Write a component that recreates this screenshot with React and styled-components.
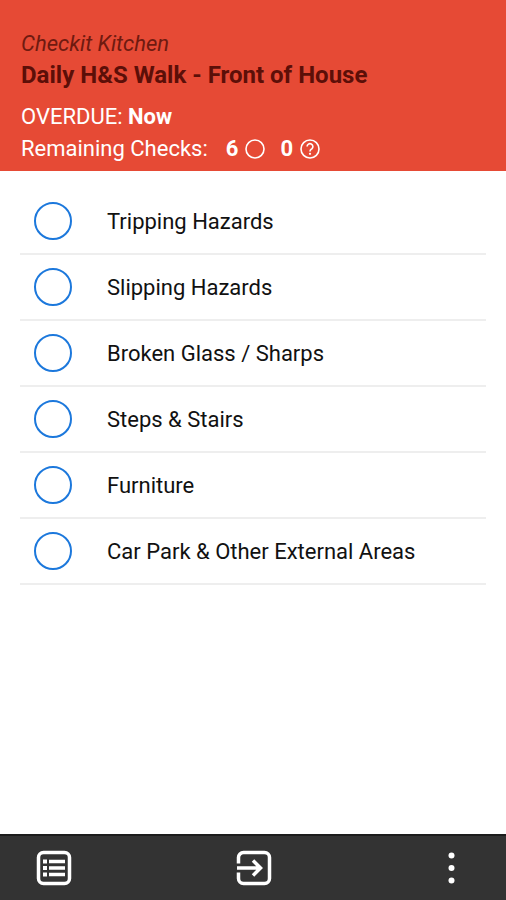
import React, { useState } from 'react'
import styled, { createGlobalStyle } from 'styled-components'

const GlobalStyle = createGlobalStyle`
  * {
    box-sizing: border-box;
  }

  body {
    margin: 0;
    background: #fff;
    font-family: Roboto, 'Liberation Sans', sans-serif;
  }
`

const Page = styled.div`
  display: flex;
  flex-direction: column;
  min-height: 100vh;
`

const Header = styled.header`
  padding: 29px 21px 6px;
  background: #e64a35;
  color: #fff;
  font-size: 22px;
  line-height: 32px;
`

const Site = styled.p`
  margin: 0;
  color: #6f1a10;
  font-style: italic;
  line-height: 30px;
`

const Title = styled.h1`
  margin: 0 0 10px;
  color: #5c0f08;
  font-size: 24px;
  font-weight: 700;
  line-height: 32px;
`

const Status = styled.p`
  display: flex;
  align-items: center;
  margin: 0;
  white-space: pre;
`

const Count = styled.span`
  display: flex;
  align-items: center;
  gap: 7px;
  margin-left: ${({ $first }) => ($first ? '18px' : '15px')};
  font-weight: 700;
`

const CheckList = styled.ul`
  flex: 1;
  margin: 0;
  padding: 18px 20px;
  list-style: none;
`

const CheckRow = styled.li`
  border-bottom: 2px solid #eee;
`

const CheckLabel = styled.label`
  display: flex;
  align-items: center;
  gap: 35px;
  height: 64px;
  padding: 0 14px;
  color: #111;
  font-size: 22px;
  cursor: pointer;
`

const CheckCircle = styled.input`
  appearance: none;
  flex: none;
  width: 38px;
  height: 38px;
  margin: 0;
  border: 2px solid #1c78dc;
  border-radius: 50%;

  &:checked {
    background: #1c78dc;
  }
`

const Toolbar = styled.nav`
  position: sticky;
  bottom: 0;
  display: flex;
  align-items: center;
  justify-content: space-between;
  height: 66px;
  padding: 0 33px;
  border-top: 2px solid #1c1c1c;
  background: #333;
`

const ToolButton = styled.button`
  display: flex;
  padding: 0;
  border: 0;
  background: none;
  color: #fff;
  cursor: pointer;
`

const CircleIcon = () => (
  <svg width="20" height="20" viewBox="0 0 20 20" fill="none" stroke="currentColor" aria-hidden="true">
    <circle cx="10" cy="10" r="9" strokeWidth="1.6" />
  </svg>
)

const QuestionIcon = () => (
  <svg width="20" height="20" viewBox="0 0 20 20" fill="none" stroke="currentColor" aria-hidden="true">
    <circle cx="10" cy="10" r="9" strokeWidth="1.6" />
    <path d="M7.100 7.500a2.900 2.900 0 1 1 4.700 2.300c-1.100.9-1.800 1.200-1.800 2.600" strokeWidth="1.6" />
    <circle cx="10" cy="14.800" r="1.100" fill="currentColor" stroke="none" />
  </svg>
)

const ListIcon = () => (
  <svg width="42" height="42" viewBox="0 0 42 42" fill="none" stroke="currentColor" aria-hidden="true">
    <rect x="5.500" y="5.500" width="31" height="31" rx="5" strokeWidth="3.5" />
    <path d="M16 14.500h16M16 21h16M16 27.500h16" strokeWidth="3.5" />
    <path d="M10 14.500h4M10 21h4M10 27.500h4" strokeWidth="4" />
  </svg>
)

const EnterIcon = () => (
  <svg width="42" height="42" viewBox="0 0 42 42" fill="none" stroke="currentColor" strokeWidth="3.5" aria-hidden="true">
    <path d="M6.500 16.500v-6a5 5 0 0 1 5-5h21a5 5 0 0 1 5 5v21a5 5 0 0 1-5 5h-21a5 5 0 0 1-5-5v-6" />
    <path d="M5 21h23M21 13.500l7.500 7.500-7.500 7.500" />
  </svg>
)

const MoreIcon = () => (
  <svg width="42" height="42" viewBox="0 0 42 42" fill="currentColor" aria-hidden="true">
    <circle cx="20.500" cy="8.500" r="3" />
    <circle cx="20.500" cy="21" r="3" />
    <circle cx="20.500" cy="33.500" r="3" />
  </svg>
)

const checks = [
  'Tripping Hazards',
  'Slipping Hazards',
  'Broken Glass / Sharps',
  'Steps & Stairs',
  'Furniture',
  'Car Park & Other External Areas',
]

const App = () => {
  const [done, setDone] = useState([])

  const toggle = name =>
    setDone(done.includes(name) ? done.filter(d => d !== name) : [...done, name])

  return (
    <Page>
      <GlobalStyle />
      <Header>
        <Site>Checkit Kitchen</Site>
        <Title>Daily H&amp;S Walk - Front of House</Title>
        <Status>
          OVERDUE: <strong>Now</strong>
        </Status>
        <Status>
          Remaining Checks:
          <Count $first>
            {checks.length - done.length}
            <CircleIcon />
          </Count>
          <Count>
            0
            <QuestionIcon />
          </Count>
        </Status>
      </Header>
      <CheckList>
        {checks.map(name => (
          <CheckRow key={name}>
            <CheckLabel>
              <CheckCircle
                type="checkbox"
                checked={done.includes(name)}
                onChange={() => toggle(name)}
              />
              {name}
            </CheckLabel>
          </CheckRow>
        ))}
      </CheckList>
      <Toolbar>
        <ToolButton type="button" aria-label="List">
          <ListIcon />
        </ToolButton>
        <ToolButton type="button" aria-label="Exit">
          <EnterIcon />
        </ToolButton>
        <ToolButton type="button" aria-label="More">
          <MoreIcon />
        </ToolButton>
      </Toolbar>
    </Page>
  )
}

export default App
